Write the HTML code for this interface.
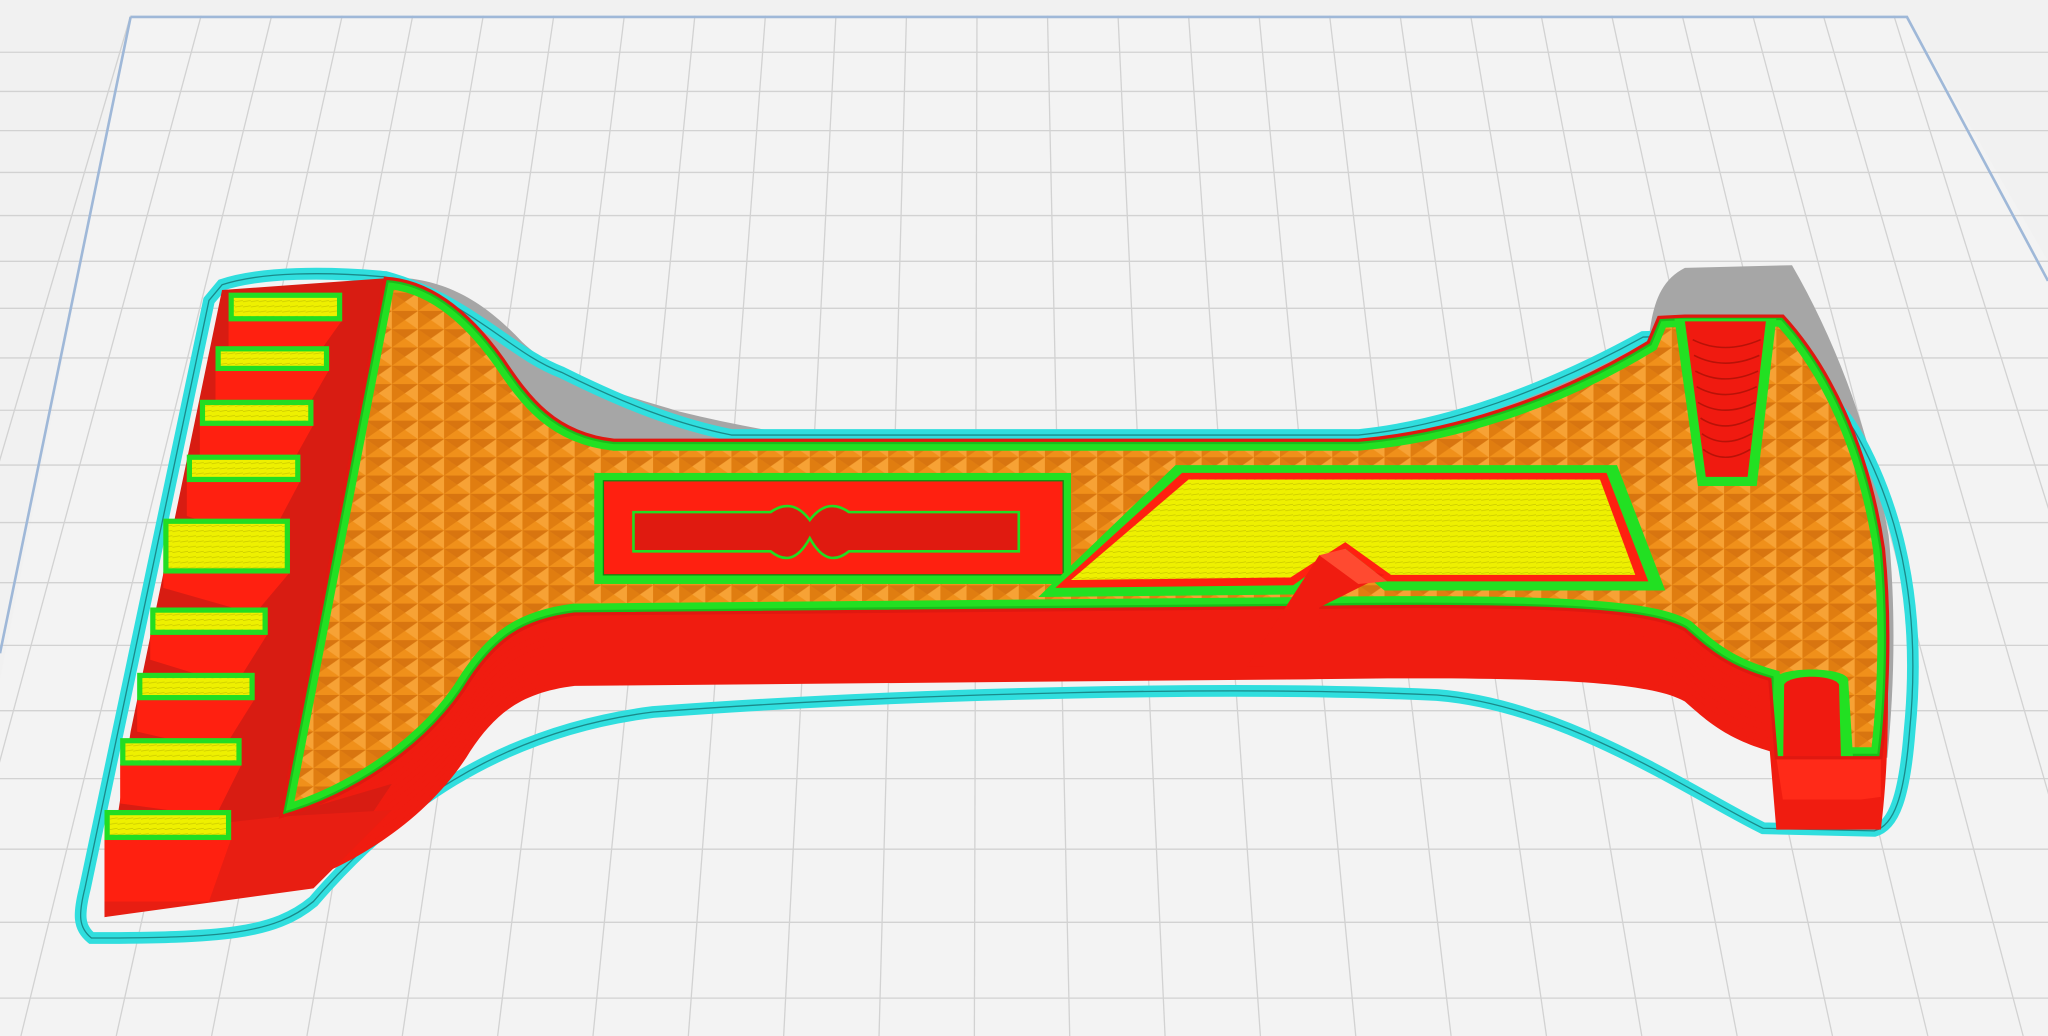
<!DOCTYPE html>
<html><head><meta charset="utf-8"><style>
html,body{margin:0;padding:0;background:#f1f1f1;overflow:hidden}
svg{display:block}
</style></head><body>
<svg width="2048" height="1036" viewBox="0 0 1568 793" preserveAspectRatio="none" xmlns="http://www.w3.org/2000/svg">
<defs>
<pattern id="pyr" width="20" height="14" patternUnits="userSpaceOnUse">
<rect width="20" height="14" fill="#f0901a"/>
<path d="M0,0 L10,7 L0,14 Z" fill="#e07d10"/>
<path d="M10,7 L20,0 L20,14 Z" fill="#f7a235"/>
<path d="M0,0 L20,0 L10,7Z" fill="#d87510"/>
</pattern>
<pattern id="yel" width="6" height="4" patternUnits="userSpaceOnUse">
<rect width="6" height="4" fill="#eef000"/><path d="M0,3 L6,2" stroke="#c8c800" stroke-width="0.6"/>
</pattern>
<path id="top" d="M295,213 C330,215 360,240 385,275 C405,305 425,332 470,337 L1040,337 C1120,330 1200,300 1262,262 L1270,243 L1290,242 L1365,242 C1400,280 1430,340 1442,420 C1448,480 1445,540 1440,580 L1360,580 L1355,520 C1320,510 1305,495 1290,482 C1265,468 1200,462 1000,465 L440,470 C400,475 380,490 360,520 C330,570 270,610 215,625 Z"/>
<clipPath id="tc"><use href="#top"/></clipPath>
</defs>
<rect width="1568" height="793" fill="#f1f1f1"/>
<polygon points="100,12 1460,12 1568,200 1568,793 0,793 0,520" fill="#f3f3f3"/>
<g stroke="#d2d2d2" stroke-width="1">
<line x1="100" y1="12" x2="-130" y2="793"/><line x1="154" y1="12" x2="-57" y2="793"/><line x1="208" y1="12" x2="16" y2="793"/><line x1="262" y1="12" x2="89" y2="793"/><line x1="316" y1="12" x2="162" y2="793"/><line x1="370" y1="12" x2="235" y2="793"/><line x1="424" y1="12" x2="308" y2="793"/><line x1="478" y1="12" x2="381" y2="793"/><line x1="532" y1="12" x2="454" y2="793"/><line x1="586" y1="12" x2="527" y2="793"/><line x1="640" y1="12" x2="600" y2="793"/><line x1="694" y1="12" x2="673" y2="793"/><line x1="748" y1="12" x2="746" y2="793"/><line x1="802" y1="12" x2="819" y2="793"/><line x1="856" y1="12" x2="892" y2="793"/><line x1="910" y1="12" x2="965" y2="793"/><line x1="964" y1="12" x2="1038" y2="793"/><line x1="1018" y1="12" x2="1111" y2="793"/><line x1="1072" y1="12" x2="1184" y2="793"/><line x1="1126" y1="12" x2="1257" y2="793"/><line x1="1180" y1="12" x2="1330" y2="793"/><line x1="1234" y1="12" x2="1403" y2="793"/><line x1="1288" y1="12" x2="1476" y2="793"/><line x1="1342" y1="12" x2="1549" y2="793"/><line x1="1396" y1="12" x2="1622" y2="793"/><line x1="1450" y1="12" x2="1695" y2="793"/>
<line x1="0" y1="40" x2="1568" y2="40"/><line x1="0" y1="70" x2="1568" y2="70"/><line x1="0" y1="100" x2="1568" y2="100"/><line x1="0" y1="132" x2="1568" y2="132"/><line x1="0" y1="165" x2="1568" y2="165"/><line x1="0" y1="200" x2="1568" y2="200"/><line x1="0" y1="236" x2="1568" y2="236"/><line x1="0" y1="274" x2="1568" y2="274"/><line x1="0" y1="314" x2="1568" y2="314"/><line x1="0" y1="356" x2="1568" y2="356"/><line x1="0" y1="400" x2="1568" y2="400"/><line x1="0" y1="446" x2="1568" y2="446"/><line x1="0" y1="494" x2="1568" y2="494"/><line x1="0" y1="544" x2="1568" y2="544"/><line x1="0" y1="596" x2="1568" y2="596"/><line x1="0" y1="650" x2="1568" y2="650"/><line x1="0" y1="706" x2="1568" y2="706"/><line x1="0" y1="764" x2="1568" y2="764"/>
</g>
<polygon points="0,0 1568,0 1568,12 0,12" fill="#f1f1f1"/>
<path d="M100,13 L1460,13 L1568,215" fill="none" stroke="#9fb8d8" stroke-width="2"/>
<path d="M100,13 L0,500" fill="none" stroke="#9fb8d8" stroke-width="2"/>
<!-- shadows -->
<path d="M295,212 C340,212 370,230 400,262 C430,290 470,300 520,315 C560,325 600,332 640,337 L470,337 C425,332 405,305 385,275 C360,240 330,215 295,213 Z" fill="#a6a6a6"/>
<path d="M1000,337 C1100,325 1180,300 1250,265 L1262,262 L1200,300 C1150,320 1100,333 1040,337 Z" fill="#a6a6a6"/>
<path d="M1262,262 C1265,235 1270,215 1290,205 L1372,203 C1405,260 1432,330 1446,410 C1452,470 1450,530 1445,580 L1440,580 C1445,540 1448,480 1442,420 C1430,340 1400,280 1365,242 L1270,243 Z" fill="#a6a6a6"/>
<!-- skirt -->
<g fill="none">
<path d="M170,218 C200,208 250,208 295,212 C360,230 390,270 430,285 C480,310 520,325 560,333 L1040,333 C1120,325 1200,290 1258,258 C1330,255 1390,280 1420,330 C1460,400 1470,480 1462,560 C1458,610 1450,632 1435,636 L1350,634 C1300,610 1200,540 1100,532 C950,525 700,530 500,545 C380,560 300,620 240,690 C210,715 170,718 70,718 C60,710 60,700 65,680 L160,230 Z" stroke="#30dede" stroke-width="9"/>
<path d="M170,218 C200,208 250,208 295,212 C360,230 390,270 430,285 C480,310 520,325 560,333 L1040,333 C1120,325 1200,290 1258,258 C1330,255 1390,280 1420,330 C1460,400 1470,480 1462,560 C1458,610 1450,632 1435,636 L1350,634 C1300,610 1200,540 1100,532 C950,525 700,530 500,545 C380,560 300,620 240,690 C210,715 170,718 70,718 C60,710 60,700 65,680 L160,230 Z" stroke="#1a8a8a" stroke-width="1"/>
</g>
<!-- extrusion -->
<g fill="#f01c10">
<use href="#top" y="55"/><use href="#top" y="50"/><use href="#top" y="45"/><use href="#top" y="40"/><use href="#top" y="35"/><use href="#top" y="30"/><use href="#top" y="25"/><use href="#top" y="20"/><use href="#top" y="15"/><use href="#top" y="10"/><use href="#top" y="5"/>
</g>
<polygon points="1360,580 1440,580 1440,610 1425,612 1365,612" fill="#ff2a18"/>
<!-- left wall -->
<polygon points="170,222 295,213 215,625 300,600 260,660 80,702 80,690 100,560" fill="#d81c12"/>
<polygon points="80,640 215,625 300,620 240,680 80,702" fill="#e81e12"/>
<g>
<g fill="#ff2010">
<polygon points="175,245 262,245 230,290 175,270"/>
<polygon points="165,283 252,283 225,330 165,310"/>
<polygon points="153,325 240,325 215,370 153,350"/>
<polygon points="143,368 230,368 205,415 143,395"/>
<polygon points="125,438 222,438 195,470 125,450"/>
<polygon points="115,485 205,485 180,525 115,505"/>
<polygon points="105,535 195,535 170,575 105,560"/>
<polygon points="92,585 185,585 165,625 92,615"/>
<polygon points="80,642 177,642 160,690 80,690"/>
</g>
<g fill="url(#yel)" stroke="#22dd22" stroke-width="4">
<rect x="177" y="226" width="83" height="18"/>
<rect x="167" y="267" width="83" height="15"/>
<rect x="155" y="308" width="83" height="16"/>
<rect x="145" y="350" width="83" height="17"/>
<rect x="127" y="399" width="93" height="38"/>
<rect x="117" y="467" width="86" height="17"/>
<rect x="107" y="517" width="86" height="17"/>
<rect x="94" y="567" width="89" height="17"/>
<rect x="82" y="622" width="93" height="19"/>
</g>
</g>
<use href="#top" fill="url(#pyr)"/>
<g clip-path="url(#tc)">
<use href="#top" fill="none" stroke="#22e022" stroke-width="16"/>
<use href="#top" fill="none" stroke="#108a10" stroke-width="6" opacity="0.4"/>
<rect x="455" y="362" width="365" height="85" fill="#22e022"/>
<rect x="462" y="368" width="352" height="72" fill="#ff2010" stroke="#118811" stroke-width="1"/>
<path d="M485,392 L590,392 C600,385 610,385 620,398 C630,385 640,385 650,392 L780,392 L780,422 L650,422 C640,430 630,430 620,412 C610,430 600,430 590,422 L485,422 Z" fill="#e01a10" stroke="#22dd22" stroke-width="2"/>
<polygon points="900,356 1238,356 1275,452 1060,452 1030,428 995,455 795,457" fill="#22e022"/>
<polygon points="905,362 1230,362 1262,445 1062,445 1030,420 990,448 808,450" fill="#ff2010"/>
<polygon points="910,367 1225,367 1252,440 1065,440 1030,415 988,442 820,444" fill="url(#yel)"/>
<path d="M1282,244 L1360,244 L1345,372 L1300,372 Z" fill="#22e022"/>
<path d="M1290,246 L1352,246 L1338,365 L1306,365 Z" fill="#f01a10"/>
<g stroke="#b81208" stroke-width="1.2" fill="none">
<path d="M1296,260 Q1320,272 1348,260"/><path d="M1297,272 Q1320,284 1347,272"/><path d="M1298,284 Q1320,296 1346,284"/><path d="M1299,296 Q1320,308 1345,296"/><path d="M1300,308 Q1320,320 1344,308"/><path d="M1302,320 Q1320,332 1342,320"/><path d="M1303,332 Q1320,344 1341,332"/><path d="M1304,344 Q1320,356 1340,344"/>
</g>
<path d="M1355,600 L1358,520 C1362,510 1412,510 1415,520 L1420,600 Z" fill="#22e022"/>
<path d="M1365,600 L1366,524 C1370,516 1404,516 1408,524 L1410,600 Z" fill="#f01a10"/>
</g>
<use href="#top" fill="none" stroke="#e01810" stroke-width="2.5"/>
<polygon points="955,510 1010,425 1060,440 1010,465 1010,512" fill="#f01c10"/>
<polygon points="1010,425 1030,420 1062,445 1040,447" fill="#ff4a30"/>
</svg>
</body></html>
